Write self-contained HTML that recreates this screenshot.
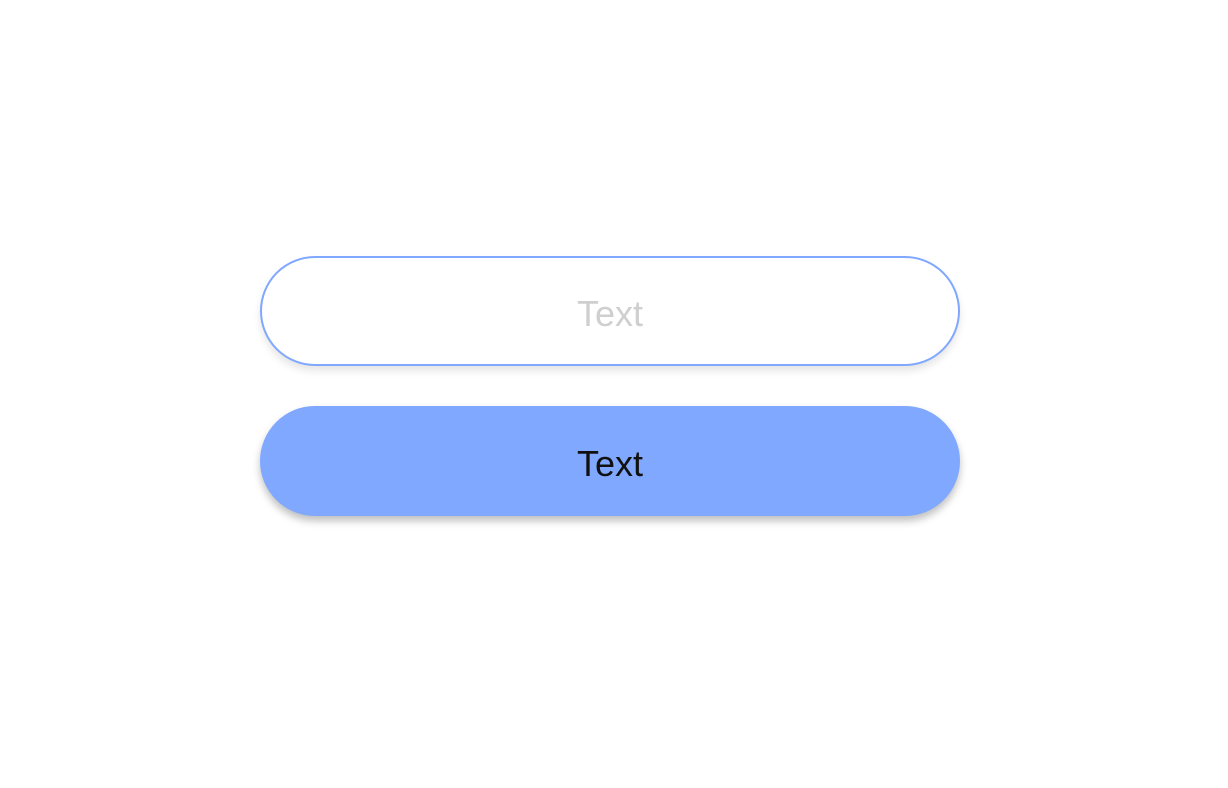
<!DOCTYPE html>
<html><head><style>
body{margin:0;width:1228px;height:788px;background:#fff;position:relative;font-family:"Liberation Sans",sans-serif;}
.b{position:absolute;left:260px;width:700px;height:110px;box-sizing:border-box;border-radius:55px;display:flex;align-items:center;justify-content:center;font-size:36px;padding-top:5px;}
.i{top:256px;border:2px solid #80a8ff;color:#cfcfcf;box-shadow:0 5px 8px rgba(0,0,0,0.1);background:#fff;}
.p{top:406px;background:#80a8ff;color:#111;box-shadow:0 5px 8px rgba(0,0,0,0.25);}
</style></head><body>
<div class="b i">Text</div>
<div class="b p">Text</div>
</body></html>
